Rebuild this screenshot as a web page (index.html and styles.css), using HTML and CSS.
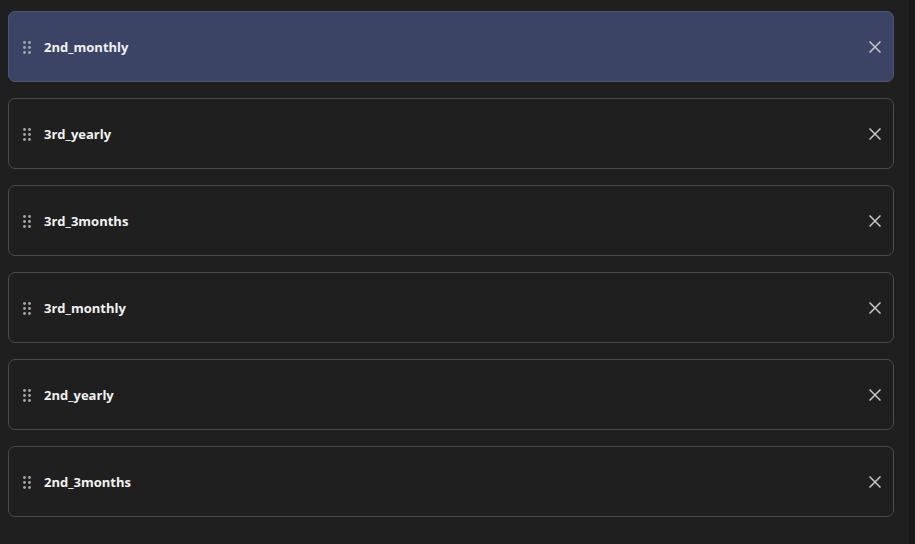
FILE: index.html
```html
<!DOCTYPE html>
<html>
<head>
<meta charset="utf-8">
<link rel="stylesheet" href="styles.css">
</head>
<body>
<div class="page">
  <main class="list">
    <div class="item active">
      <svg class="grip" width="8" height="13" viewBox="0 0 8 13"><g fill="currentColor"><circle cx="1.5" cy="1.5" r="1.4"/><circle cx="6.5" cy="1.5" r="1.4"/><circle cx="1.5" cy="6.5" r="1.4"/><circle cx="6.5" cy="6.5" r="1.4"/><circle cx="1.5" cy="11.5" r="1.4"/><circle cx="6.5" cy="11.5" r="1.4"/></g></svg>
      <span class="label">2nd_monthly</span>
      <svg class="close" width="12" height="12" viewBox="0 0 12 12"><path d="M0.5 0.5L11.5 11.5M11.5 0.5L0.5 11.5" stroke="currentColor" stroke-width="1.5"/></svg>
    </div>
    <div class="item">
      <svg class="grip" width="8" height="13" viewBox="0 0 8 13"><g fill="currentColor"><circle cx="1.5" cy="1.5" r="1.4"/><circle cx="6.5" cy="1.5" r="1.4"/><circle cx="1.5" cy="6.5" r="1.4"/><circle cx="6.5" cy="6.5" r="1.4"/><circle cx="1.5" cy="11.5" r="1.4"/><circle cx="6.5" cy="11.5" r="1.4"/></g></svg>
      <span class="label">3rd_yearly</span>
      <svg class="close" width="12" height="12" viewBox="0 0 12 12"><path d="M0.5 0.5L11.5 11.5M11.5 0.5L0.5 11.5" stroke="currentColor" stroke-width="1.5"/></svg>
    </div>
    <div class="item">
      <svg class="grip" width="8" height="13" viewBox="0 0 8 13"><g fill="currentColor"><circle cx="1.5" cy="1.5" r="1.4"/><circle cx="6.5" cy="1.5" r="1.4"/><circle cx="1.5" cy="6.5" r="1.4"/><circle cx="6.5" cy="6.5" r="1.4"/><circle cx="1.5" cy="11.5" r="1.4"/><circle cx="6.5" cy="11.5" r="1.4"/></g></svg>
      <span class="label">3rd_3months</span>
      <svg class="close" width="12" height="12" viewBox="0 0 12 12"><path d="M0.5 0.5L11.5 11.5M11.5 0.5L0.5 11.5" stroke="currentColor" stroke-width="1.5"/></svg>
    </div>
    <div class="item">
      <svg class="grip" width="8" height="13" viewBox="0 0 8 13"><g fill="currentColor"><circle cx="1.5" cy="1.5" r="1.4"/><circle cx="6.5" cy="1.5" r="1.4"/><circle cx="1.5" cy="6.5" r="1.4"/><circle cx="6.5" cy="6.5" r="1.4"/><circle cx="1.5" cy="11.5" r="1.4"/><circle cx="6.5" cy="11.5" r="1.4"/></g></svg>
      <span class="label">3rd_monthly</span>
      <svg class="close" width="12" height="12" viewBox="0 0 12 12"><path d="M0.5 0.5L11.5 11.5M11.5 0.5L0.5 11.5" stroke="currentColor" stroke-width="1.5"/></svg>
    </div>
    <div class="item">
      <svg class="grip" width="8" height="13" viewBox="0 0 8 13"><g fill="currentColor"><circle cx="1.5" cy="1.5" r="1.4"/><circle cx="6.5" cy="1.5" r="1.4"/><circle cx="1.5" cy="6.5" r="1.4"/><circle cx="6.5" cy="6.5" r="1.4"/><circle cx="1.5" cy="11.5" r="1.4"/><circle cx="6.5" cy="11.5" r="1.4"/></g></svg>
      <span class="label">2nd_yearly</span>
      <svg class="close" width="12" height="12" viewBox="0 0 12 12"><path d="M0.5 0.5L11.5 11.5M11.5 0.5L0.5 11.5" stroke="currentColor" stroke-width="1.5"/></svg>
    </div>
    <div class="item">
      <svg class="grip" width="8" height="13" viewBox="0 0 8 13"><g fill="currentColor"><circle cx="1.5" cy="1.5" r="1.4"/><circle cx="6.5" cy="1.5" r="1.4"/><circle cx="1.5" cy="6.5" r="1.4"/><circle cx="6.5" cy="6.5" r="1.4"/><circle cx="1.5" cy="11.5" r="1.4"/><circle cx="6.5" cy="11.5" r="1.4"/></g></svg>
      <span class="label">2nd_3months</span>
      <svg class="close" width="12" height="12" viewBox="0 0 12 12"><path d="M0.5 0.5L11.5 11.5M11.5 0.5L0.5 11.5" stroke="currentColor" stroke-width="1.5"/></svg>
    </div>
  </main>
  <div class="strip"></div>
</div>
</body>
</html>
```
FILE: styles.css
```css
html, body {
  margin: 0;
  padding: 0;
  background: #1f1f1f;
  height: 100%;
  overflow: hidden;
}
.page {
  display: flex;
  height: 544px;
}
.list {
  flex: 1;
  display: flex;
  flex-direction: column;
  gap: 16px;
  padding: 11px 15px 0 8px;
}
.strip {
  width: 6px;
  background: #181818;
}
.item {
  height: 69px;
  border: 1px solid #4a4a4a;
  border-radius: 7px;
  display: flex;
  align-items: center;
  padding: 0 12px 0 14px;
  color: #f2f2f2;
  font-family: "Open Sans", "Noto Sans", sans-serif;
  font-weight: 700;
  font-size: 13px;
}
.item.active {
  background: #3c4466;
  border-color: #4f5670;
}
.grip {
  color: #a8a8a8;
  flex: none;
  margin-top: 1px;
}
.label {
  margin-left: 13px;
  flex: 1;
  padding-top: 1px;
}
.close {
  color: #c8c8c8;
  flex: none;
}
```
